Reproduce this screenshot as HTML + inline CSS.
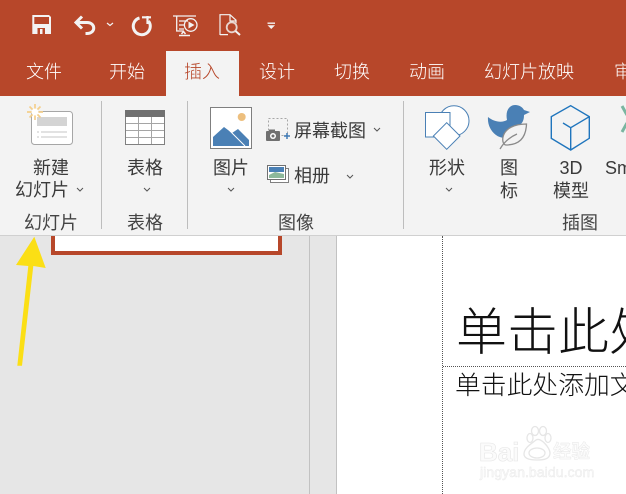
<!DOCTYPE html>
<html lang="zh"><head><meta charset="utf-8"><style>
html,body{margin:0;padding:0}
body{width:626px;height:494px;overflow:hidden;position:relative;background:#e6e6e6;font-family:"Liberation Sans","Noto Sans CJK SC",sans-serif}
.a{position:absolute}
.t{position:absolute;white-space:nowrap;line-height:24px;font-size:18px;color:#3a3a3a;font-weight:400;transform:translateX(-50%);font-family:"Liberation Sans","Noto Sans CJK SC",sans-serif}
.l{color:#444}
.tab{color:#fff;top:60px;font-weight:300}
.sep{position:absolute;top:101px;height:128px;width:1px;background:#bdbdbd}
svg{position:absolute;overflow:visible}
</style></head><body>
<div class="a" style="left:0;top:0;width:626px;height:96px;background:#b7472a"></div>
<div class="a" style="left:0;top:96px;width:626px;height:139px;background:#f3f3f3"></div>
<div class="a" style="left:0;top:235px;width:626px;height:1px;background:#d0d0d0"></div>
<div class="a" style="left:166px;top:51px;width:73px;height:46px;background:#f3f3f3"></div>

<svg style="left:0;top:0" width="300" height="50" fill="none">
<path d="M32.300 15H49l2 2v17H32.300z" fill="#f3f3f3"/><path d="M34.300 17H49v7H34.300z" fill="#b7472a"/><path d="M37.500 28H45v6h-7.500z" fill="#b7472a"/><path d="M40 29h2.500v5H40z" fill="#f3f3f3"/>
<path d="M82 16.500l-6 6 6 6M76 22.500h11c9 0 9 11 0 11h-1.500" stroke="#f3f3f3" stroke-width="3"/>
<path d="M107 23l3 2.500 3-2.500" stroke="#f3f3f3" stroke-width="1.200"/>
<path d="M139.500 18A8.500 8.500 0 1 0 148.500 21" stroke="#f3f3f3" stroke-width="3"/><path d="M142 17.300h9M147.500 16v8" stroke="#f3f3f3" stroke-width="2.200"/>
<path d="M173 16h23M176.700 16v15h7M179 21h9M179 25h6M179 29h5" stroke="#f3f3f3" stroke-width="1.300"/>
<circle cx="190.700" cy="25" r="6.300" stroke="#f3f3f3" stroke-width="1.300"/><path d="M188.500 21.500l6 3.500-6 3.500z" fill="#f3f3f3"/>
<path d="M179 35.500h11M181.500 34l2-2.500 2 2.500" stroke="#f3f3f3" stroke-width="1.500"/>
<path d="M220 35V14.700h10l6 5.500v3M230 15v6h6M220 34.600h8" stroke="#f3f3f3" stroke-width="1.200"/>
<circle cx="231.700" cy="27.300" r="5" stroke="#e8d5cf" stroke-width="1.800"/><path d="M235.500 31l4.500 4" stroke="#f3f3f3" stroke-width="2"/>
<path d="M267.500 22.500h7.500v1.400h-7.500zM267.500 25.300h7.500l-3.750 3.700z" fill="#f3f3f3"/>
</svg>

<span class="t tab" style="left:44px">文件</span>
<span class="t tab" style="left:127px">开始</span>
<span class="t tab" style="left:202px;color:#b7472a">插入</span>
<span class="t tab" style="left:277px">设计</span>
<span class="t tab" style="left:352px">切换</span>
<span class="t tab" style="left:427px">动画</span>
<span class="t tab" style="left:529px">幻灯片放映</span>
<span class="t tab" style="left:614px;transform:none">审</span>

<div class="sep" style="left:101px"></div><div class="sep" style="left:187px"></div><div class="sep" style="left:403px"></div>

<svg style="left:0;top:95px" width="626" height="140" fill="none">
<rect x="31.500" y="16.500" width="41" height="33" rx="3" fill="#fff" stroke="#a6a6a6"/>
<rect x="37" y="22" width="30" height="9" fill="#d4d4d4"/>
<path d="M37 37h2M41 37h26M37 42h2M41 42h26" stroke="#c4c4c4"/>
<path d="M35 9v16M27 17h16M29.500 11.500l11 11M40.500 11.500l-11 11" stroke="#f4cf8c" stroke-width="1.700"/>
<circle cx="35" cy="17" r="3.500" fill="#fff"/>
<rect x="125.500" y="15.500" width="39" height="34" fill="#fff" stroke="#808080"/>
<rect x="125" y="15" width="40" height="7" fill="#707070"/>
<path d="M126 28.500h38M126 35.500h38M126 42.500h38M138.500 22v27M151.500 22v27" stroke="#a5a5a5"/>
<rect x="210.500" y="12.500" width="41" height="41" fill="#fff" stroke="#7f7f7f"/>
<circle cx="241.700" cy="22" r="4" fill="#edbf7e"/>
<path d="M213 51V42L224 32 232 38 238 34 249 45V51z" fill="#4a80b5"/><path d="M229 35l16 16" stroke="#fff" stroke-width="1"/>
<rect x="268.500" y="23.500" width="19" height="17" stroke="#a6a6a6" stroke-dasharray="2 2"/>
<rect x="266" y="36" width="14" height="10" rx="1" fill="#707070"/><circle cx="273" cy="41" r="3" fill="#fff"/><circle cx="273" cy="41" r="1.500" fill="#707070"/><rect x="269" y="34.500" width="6" height="2" fill="#707070"/>
<path d="M287 38v6M284 41h6" stroke="#3f7ab5" stroke-width="1.500"/>
<rect x="270.500" y="73.500" width="18" height="14" fill="#fff" stroke="#808080"/>
<rect x="267.500" y="70.500" width="18" height="14" fill="#fff" stroke="#707070"/>
<rect x="269" y="72" width="15" height="5" fill="#4a80b5"/><path d="M269 80l6-3 9 2v4h-15z" fill="#8db89a"/>
<circle cx="454" cy="25.700" r="15" fill="#fff" stroke="#4a80b5"/>
<rect x="425.500" y="17.500" width="24.500" height="24.500" fill="#fff" stroke="#4a80b5"/>
<path d="M446.700 27.700L460 41 446.700 54.300 433.400 41z" fill="#fff" stroke="#4a80b5"/>
<path d="M488 22C494 27 502 28 507 25 505 15 510 10 515 10 520 10 523 13 524 15L530 17 524 20C524 26 522 28 520 30L505 43C495 43 487 33 488 22z" fill="#4a80b5"/>
<path d="M526.500 29C515 29 505 33 503 42 502 47 504 50 506 50 520 50 526 42 526.500 29z" fill="#f3f3f3" stroke="#8a8a8a" stroke-width="1.300"/>
<path d="M500 54C504 47 510 42 517 39" stroke="#8a8a8a" stroke-width="1.300"/>
<path d="M570.700 10.700L589.300 21.700V43.300L570.700 55 551.300 43.300V21.700zM570.700 32.700V55M570.700 32.700L589.300 21.700M570.700 32.700L563 28" stroke="#1f75bd" stroke-width="1.400"/>
<path d="M622 11l5 9M622 37l5-9" stroke="#7ab5a0" stroke-width="3"/>
<g stroke="#555" stroke-width="1"><path d="M77 93l3 3 3-3M144 93l3 3 3-3M228 93l3 3 3-3M374 33l3 3 3-3M347 80l3 3 3-3M446 93l3 3 3-3"/></g>
</svg>

<span class="t" style="left:51px;top:156px">新建</span>
<span class="t" style="left:42px;top:178px">幻灯片</span>
<span class="t l" style="left:51px;top:211px">幻灯片</span>
<span class="t" style="left:145px;top:156px">表格</span>
<span class="t l" style="left:145px;top:211px">表格</span>
<span class="t" style="left:231px;top:156px">图片</span>
<span class="t" style="left:330px;top:119px">屏幕截图</span>
<span class="t" style="left:312px;top:164px">相册</span>
<span class="t l" style="left:296px;top:211px">图像</span>
<span class="t" style="left:447px;top:156px">形状</span>
<span class="t" style="left:509px;top:156px">图</span>
<span class="t" style="left:509px;top:179px">标</span>
<span class="t" style="left:571px;top:156px">3D</span>
<span class="t" style="left:571px;top:179px">模型</span>
<span class="t" style="left:605px;top:156px;transform:none">Sm</span>
<span class="t l" style="left:580px;top:211px">插图</span>

<div class="a" style="left:51px;top:236px;width:223px;height:15px;background:#fff;border:4px solid #b7472a;border-top:0"></div>
<div class="a" style="left:309px;top:236px;width:1px;height:258px;background:#c2c2c2"></div>
<div class="a" style="left:336px;top:236px;width:1px;height:258px;background:#c2c2c2"></div>
<div class="a" style="left:337px;top:236px;width:289px;height:258px;background:#fff"></div>
<div class="a" style="left:442px;top:236px;width:0;height:258px;border-left:1px dotted #555"></div>
<div class="a" style="left:443px;top:366px;width:183px;height:0;border-top:1px dotted #555"></div>

<svg style="left:0;top:236px" width="60" height="140"><path d="M34.300 .7L45.700 32 33.300 30 22 129.700H17.300L28.300 30 16 29z" fill="#fbdf15"/></svg>

<span class="t" style="left:456px;top:299px;transform:none;font-size:51px;line-height:68px;color:#111;font-weight:300">单击此处</span>
<span class="t" style="left:455px;top:371px;transform:none;font-size:25.800px;line-height:30px;color:#111;font-weight:300">单击此处添加文</span>

<span class="t" style="left:479px;top:438px;transform:none;font-size:26px;line-height:28px;font-weight:700;color:#fbfbfb;-webkit-text-stroke:.6px #e6e6e6">Bai</span>
<span class="t" style="left:553px;top:441px;transform:none;font-size:18.500px;line-height:22px;font-weight:700;color:#fbfbfb;-webkit-text-stroke:.4px #e6e6e6">经验</span>
<span class="t" style="left:480px;top:465px;transform:none;font-size:14.200px;line-height:16px;color:#f8f8f8;-webkit-text-stroke:.4px #e8e8e8">jingyan.baidu.com</span>
<svg style="left:523px;top:426px" width="30" height="36" fill="none" stroke="#e6e6e6" stroke-width="1.300"><ellipse cx="7" cy="12" rx="3" ry="4.500"/><ellipse cx="12" cy="5" rx="3.500" ry="4.500"/><ellipse cx="20" cy="5" rx="3.500" ry="4.500"/><ellipse cx="25" cy="12" rx="3" ry="4.500"/><path d="M13 14C8 18 1 22 1 28 1 33 7 34 14 34 21 34 27 33 27 27 27 22 18 11 13 14z"/><ellipse cx="14" cy="27" rx="8" ry="5"/></svg>
</body></html>
